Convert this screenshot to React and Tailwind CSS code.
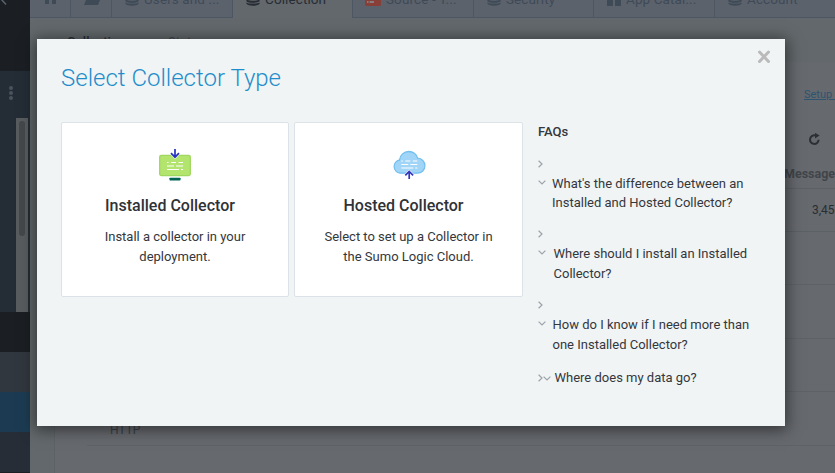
import React from "react";

const DatabaseIcon = ({ className = "" }) => (
  <svg className={"shrink-0 " + className} width="14" height="14" viewBox="0 0 14 14" fill="currentColor">
    <ellipse cx="7" cy="2.4" rx="6.6" ry="2.3" />
    <path d="M.4 4.2C2 6 12 6 13.6 4.2v2C12 8.200 2 8.200.4 6.200z" />
    <path d="M.4 7.400C2 9.200 12 9.200 13.600 7.400v1.800C12 11.200 2 11.200.4 9.200z" />
    <path d="M.4 10.400C2 12 12 12 13.600 10.400v1.400C12 14.400 2 14.400.4 11.800z" />
  </svg>
);

const BoxesIcon = () => (
  <svg className="shrink-0" width="14" height="14" viewBox="0 0 14 14" fill="currentColor">
    <path d="M0 1h6v5H0zM8 1h6v5H8zM0 8h6v6H0zM8 8h6v6H8z" />
  </svg>
);

const Tab = ({ icon, label, width, active }) => (
  <div
    className={
      "flex h-[18px] shrink-0 items-end gap-[5px] overflow-hidden pl-[13px] text-[13.5px] tracking-[0.1px] whitespace-nowrap " +
      width +
      (active
        ? " bg-[#62686b] text-[#272c35]"
        : " border-r border-b border-[#4c5763] bg-[#5b626c] text-[#3f4a57]")
    }
  >
    <div className={"flex shrink-0 " + (active ? "mb-[12px]" : "mb-[11px]")}>{icon}</div>
    <span className={"leading-[18px] " + (active ? "mb-[10px]" : "mb-[9px]")}>{label}</span>
  </div>
);

const Sidebar = () => (
  <aside className="flex h-[473px] w-[30px] shrink-0 flex-col overflow-hidden bg-[#1b1f24]">
    <div className="h-[71px] shrink-0">
      <svg width="8" height="6" viewBox="0 0 8 6" fill="none" stroke="#58636d" strokeWidth="1.500">
        <path d="M1-1l5 5.500" />
      </svg>
    </div>
    <div className="flex h-[241px] shrink-0 flex-col bg-[#242c36]">
      <div className="flex h-[47px] shrink-0 flex-col items-center gap-[1px] pt-[15px] pr-[8px]">
        <i className="size-1 rounded-full bg-[#4a535d]" />
        <i className="size-1 rounded-full bg-[#4a535d]" />
        <i className="size-1 rounded-full bg-[#4a535d]" />
      </div>
      <div className="ml-4 flex h-[194px] w-3 justify-center bg-[#595c5f] pt-[3px]">
        <div className="h-[115px] w-[6px] rounded-full bg-[#44484b]" />
      </div>
    </div>
    <div className="h-10 shrink-0 bg-[#1b1f23]" />
    <div className="h-10 shrink-0 bg-[#31373e]" />
    <div className="h-10 shrink-0 bg-[#1c3b52]" />
    <div className="h-10 shrink-0 bg-[#272d37]" />
  </aside>
);

const Background = () => (
  <div className="flex h-[473px] w-[835px] overflow-hidden">
    <Sidebar />
    <main className="flex w-[805px] flex-col bg-[#62686b]">
      <nav className="flex h-[18px] shrink-0">
        <div className="h-[18px] w-[41px] shrink-0 border-r border-b border-[#4c5763] bg-[#5b626c] pl-[15px]">
          <svg width="11" height="4" viewBox="0 0 11 4" fill="#3f4a57"><path d="M0 0h4v4H0zM7 0h4v4H7z" /></svg>
        </div>
        <div className="h-[18px] w-[41px] shrink-0 border-r border-b border-[#4c5763] bg-[#5b626c] pl-[13px]">
          <svg width="16" height="5" viewBox="0 0 16 5" fill="#3f4a57"><path d="M2 0h14l-2 5H0z" /></svg>
        </div>
        <Tab width="w-[121px]" icon={<DatabaseIcon />} label="Users and ..." />
        <Tab width="w-[119px]" icon={<DatabaseIcon />} label="Collection" active />
        <div className="w-px shrink-0 bg-[#4c5763]" />
        <Tab
          width="w-[121px]"
          icon={
            <svg className="-ml-px" width="16" height="14" viewBox="0 0 16 14">
              <rect y="-4" width="16" height="18" rx="1.500" fill="#873f38" />
              <path d="M2 9h1.500v2H2zM4.500 9H9v2H4.500z" fill="#857d7e" />
            </svg>
          }
          label="Source - T..."
        />
        <Tab width="w-[120px]" icon={<DatabaseIcon />} label="Security" />
        <Tab width="w-[121px]" icon={<BoxesIcon />} label="App Catal..." />
        <Tab width="w-[121px]" icon={<DatabaseIcon />} label="Account" />
      </nav>
      <div className="flex h-[44px] shrink-0 gap-[36px] pt-[15px] pl-[37px] text-[13px] leading-[18px] text-[#40464d]">
        <b className="w-[65px] font-medium text-[#292e35]">Collection</b>
        <span>Status</span>
      </div>
      <section className="ml-6 flex h-[411px] flex-col overflow-hidden border-l border-[#5d6267] bg-[#66696e]">
        <div className="flex h-[66px] shrink-0 flex-col pt-[25px] pl-[749px] text-[11px] leading-[16px] text-[#2d5570]">
          <span className="underline">Setup&nbsp;Wizard</span>
        </div>
        <div className="flex h-[34px] shrink-0 pt-[5px] pl-[753px]">
          <svg width="13" height="13" viewBox="0 0 13 13" fill="none" stroke="#2c3035" strokeWidth="2">
            <path d="M10.600 6.800A4.300 4.300 0 1 1 7.600 2.500" />
            <path d="M7-.2l4.600 2.700L7 5.500z" fill="#2c3035" stroke="none" />
          </svg>
        </div>
        <div className="ml-8 h-[27px] shrink-0 border-b border-[#5c6166] pl-[697px] text-[12.5px] leading-[24px] font-bold whitespace-nowrap text-[#414549]">
          Message
        </div>
        <div className="ml-8 h-[43px] shrink-0 border-b border-[#5c6166] pl-[725px] text-[12px] leading-[42px] text-[#292d31]">
          3,456
        </div>
        <div className="ml-8 h-[53px] shrink-0 border-b border-[#5f6368]" />
        <div className="ml-8 h-[54px] shrink-0 border-b border-[#5f6368]" />
        <div className="ml-8 h-[53px] shrink-0 border-b border-[#5f6368]" />
        <div className="ml-8 h-[54px] shrink-0 border-b border-[#5f6368] pt-[29px] pl-[23px] text-[12px] leading-[18px] text-[#3d4146]">
          HTTP
        </div>
      </section>
    </main>
  </div>
);

const Lines = () => (
  <path d="M10 13.500h1.500M14 13.500h5M21.500 13.500h4.500M10 17h7M19 17h7M10 20.500h12M24 20.500h2" stroke="#fff" strokeWidth="1.200" />
);

const InstalledIcon = () => (
  <svg width="36" height="34" viewBox="0 0 36 34" fill="none">
    <rect x="2.700" y="6.400" width="30.600" height="20.200" rx="1.500" fill="#b3e46e" stroke="#9fd75f" strokeWidth="1.300" />
    <path d="M12.500 4.500h11L18 10.200z" fill="#fff" />
    <Lines />
    <path d="M18 0v8M14 4.200l4 4 4-4" stroke="#2733bd" strokeWidth="1.700" />
    <rect x="12.500" y="28.700" width="11" height="2.700" rx=".6" fill="#006354" />
  </svg>
);

const HostedIcon = () => (
  <svg width="36" height="34" viewBox="0 0 36 34" fill="none">
    <path
      d="M9 24.200a6.700 6.700 0 0 1-.5-13.200C9 6 12.900 2.500 17.800 2.500c4.200 0 7.800 2.800 8.800 6.700 4.200.2 7.300 3.500 7.300 7.500 0 4.200-3.200 7.500-7.400 7.500z"
      fill="#a0d5f8" stroke="#73c0ee" strokeWidth="1.300"
    />
    <g transform="translate(.3 -1.500)"><Lines /></g>
    <path d="M12.700 26l5.500-5.500 5.500 5.500z" fill="#fff" />
    <path d="M18.200 30v-7.500M14.300 26.300l3.900-3.900 3.900 3.900" stroke="#3037bd" strokeWidth="1.700" />
  </svg>
);

const Card = ({ icon, title, lines, width, titleShift }) => (
  <div className={"flex h-[175px] flex-col items-center rounded-[2px] border border-[#dbe3e8] bg-white pt-[26px] " + width}>
    {icon}
    <h2 className={"mt-[12px] text-[16px] leading-[22px] font-medium text-[#2f3237] " + titleShift}>{title}</h2>
    <p className="mt-[10px] text-center text-[13px] leading-[20px] text-[#34373c]">
      {lines[0]}
      <br />
      {lines[1]}
    </p>
  </div>
);

const Right = () => (
  <svg className="shrink-0" width="5" height="8" viewBox="0 0 5 8" fill="none" stroke="#9da3a9" strokeWidth="1.200">
    <path d="M.6.8L4 4 .6 7.200" />
  </svg>
);
const Down = ({ className = "" }) => (
  <svg className={"shrink-0 " + className} width="8" height="5" viewBox="0 0 8 5" fill="none" stroke="#9da3a9" strokeWidth="1.200">
    <path d="M.6.6L4 4 7.400.6" />
  </svg>
);

const Faq = ({ lines, gap, height, leading }) => (
  <div className={"flex flex-col " + height}>
    <Right />
    <div className={"mt-[6px] flex " + gap}>
      <Down className="mt-[6px]" />
      <p className={"text-[13px] whitespace-nowrap " + leading}>
        {lines[0]}
        <br />
        {lines[1]}
      </p>
    </div>
  </div>
);

export default function App() {
  return (
    <div className="relative h-[473px] w-[835px] overflow-hidden font-[Roboto,sans-serif]">
      <Background />
      <div
        role="dialog"
        className="absolute top-[39px] left-[37px] flex h-[387px] w-[748px] flex-col bg-[#f0f4f5] pl-6 shadow-[0_2px_14px_2px_rgba(0,0,0,0.5)]"
      >
        <header className="flex h-[83px] shrink-0 justify-between">
          <h1 className="mt-[23px] text-[24px] leading-[32px] font-light text-[#1f8dcb]">Select Collector Type</h1>
          <svg className="mt-[11px] mr-[14px]" width="14" height="14" viewBox="0 0 14 14" stroke="#bababa" strokeWidth="3" strokeLinecap="round">
            <path d="M2.500 2l9 9.500M11.500 2l-9 9.500" />
          </svg>
        </header>
        <div className="flex">
          <Card
            width="w-[228px]"
            icon={<InstalledIcon />}
            title="Installed Collector"
            titleShift="mr-[10px]"
            lines={["Install a collector in your", "deployment."]}
          />
          <div className="w-[5px]" />
          <Card
            width="w-[229px]"
            icon={<HostedIcon />}
            title="Hosted Collector"
            titleShift="mr-[10px]"
            lines={["Select to set up a Collector in", "the Sumo Logic Cloud."]}
          />
          <div className="ml-[15px] flex flex-col text-[#34373c]">
            <h3 className="mb-[18px] text-[13px] leading-[20px] font-medium">FAQs</h3>
            <Faq height="h-[70px]" gap="gap-[6px]" leading="leading-[19px]" lines={["What's the difference between an", "Installed and Hosted Collector?"]} />
            <Faq height="h-[71px]" gap="gap-[7.5px]" leading="leading-[20px]" lines={["Where should I install an Installed", "Collector?"]} />
            <Faq height="h-[67px]" gap="gap-[6.5px]" leading="leading-[20px]" lines={["How do I know if I need more than", "one Installed Collector?"]} />
            <div className="flex items-center text-[13px] leading-[20px]">
              <Right />
              <Down />
              <span className="ml-[3.5px]">Where does my data go?</span>
            </div>
          </div>
        </div>
      </div>
    </div>
  );
}
